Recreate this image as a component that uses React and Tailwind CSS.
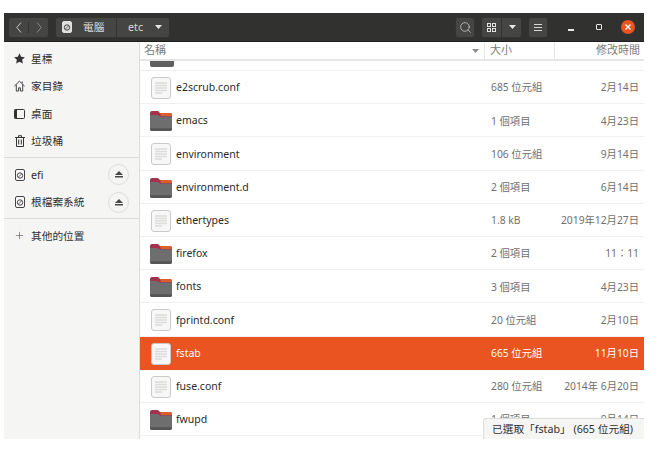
import { Search, Plus } from "lucide-react";

const FONT = "[font-family:'Noto_Sans','Noto_Sans_CJK_TC',sans-serif]";

const FILES = [
  { name: "e2scrub.conf", size: "685 位元組", date: "2月14日", type: "doc" },
  { name: "emacs", size: "1 個項目", date: "4月23日", type: "folder" },
  { name: "environment", size: "106 位元組", date: "9月14日", type: "doc" },
  { name: "environment.d", size: "2 個項目", date: "6月14日", type: "folder" },
  { name: "ethertypes", size: "1.8 kB", date: "2019年12月27日", type: "doc" },
  { name: "firefox", size: "2 個項目", date: "11：11", type: "folder" },
  { name: "fonts", size: "3 個項目", date: "4月23日", type: "folder" },
  { name: "fprintd.conf", size: "20 位元組", date: "2月10日", type: "doc" },
  { name: "fstab", size: "665 位元組", date: "11月10日", type: "doc", selected: true },
  { name: "fuse.conf", size: "280 位元組", date: "2014年 6月20日", type: "doc" },
  { name: "fwupd", size: "1 個項目", date: "9月14日", type: "folder" },
];

// Text file icon
const DocIcon = () => (
  <svg width="20" height="22" viewBox="0 0 20 22" className="shrink-0">
    <rect x="0.5" y="0.5" width="19" height="21" rx="2.5" fill="#f7f7f7" stroke="#c9c9c6" />
    <path d="M4 6h12M4 8.5h12M4 11h12M4 13.5h12M4 16h7" stroke="#dcdcda" strokeWidth="1.4" />
  </svg>
);

// Yaru style folder
const FolderIcon = () => (
  <svg width="24" height="22" viewBox="0 0 24 22" className="shrink-0">
    <path d="M1 3a2 2 0 0 1 2-2h6l2 2h10a2 2 0 0 1 2 2v4H1z" fill="#a3324f" />
    <path d="M11 3h10a2 2 0 0 1 2 2v1H12z" fill="#d9602c" />
    <path d="M1 6a1 1 0 0 1 1-1h6l3 1.500h11a1 1 0 0 1 1 1V19a2 2 0 0 1-2 2H3a2 2 0 0 1-2-2z" fill="#6e6e6e" />
    <path d="M1 19a2 2 0 0 0 2 2h18a2 2 0 0 0 2-2v-.7H1z" fill="#555" />
  </svg>
);

const DiskIcon = ({ light }) => (
  <svg width="10" height="12" viewBox="0 0 10 12" className="shrink-0">
    <rect x="0.5" y="0.5" width="9" height="11" rx="1.5" fill={light ? "#e0e0de" : "#fafafa"} stroke={light ? "#e0e0de" : "#444"} />
    <circle cx="5" cy="6.500" r="2.700" fill="none" stroke="#444" strokeWidth="1" />
    <path d="M3.500 8l3-3" stroke="#444" strokeWidth="0.8" />
  </svg>
);

const StarIcon = () => (
  <svg width="11" height="11" viewBox="0 0 11 11">
    <path d="M5.500 0.300 7.100 3.800 10.900 4.200 8.100 6.800 8.900 10.600 5.500 8.700 2.100 10.600 2.900 6.800 0.100 4.200 3.900 3.800z" fill="#333" />
  </svg>
);

const HomeIcon = () => (
  <svg width="12" height="12" viewBox="0 0 12 12" fill="none" stroke="#333" strokeWidth="1">
    <path d="M0.500 6 6 0.800 11.500 6M2.500 4.500V11.500H5V8H7V11.500H9.500V4.500M9 3V1.200" />
  </svg>
);

const PanelIcon = () => (
  <svg width="11" height="10" viewBox="0 0 11 10">
    <rect x="0.500" y="0.500" width="10" height="9" rx="1" fill="none" stroke="#333" />
    <rect x="0.500" y="0.500" width="2.500" height="9" fill="#333" />
  </svg>
);

const TrashIcon = () => (
  <svg width="10" height="12" viewBox="0 0 10 12" fill="none" stroke="#333" strokeWidth="1">
    <path d="M0 2.500H10M3.500 2.500V0.700H6.500V2.500M1.500 2.500V11.500H8.500V2.500M3.700 4.500V9.500M6.300 4.500V9.500" />
  </svg>
);

const EjectButton = () => (
  <div className="w-[21px] h-[21px] rounded-full border border-[#dcdcda] flex items-center justify-center shrink-0">
    <svg width="8" height="7" viewBox="0 0 8 7">
      <path d="M4 0 8 4H0z" fill="#4a4a4a" />
      <rect y="5" width="8" height="1.5" fill="#4a4a4a" />
    </svg>
  </div>
);

const SideItem = ({ icon, label, eject }) => (
  <div className="flex items-center h-[27.5px] pl-[10px] pr-[10px]">
    <div className="w-[11px] flex justify-center shrink-0">{icon}</div>
    <span className="ml-[6px] text-[10.7px] text-[#2f2f2f] grow">{label}</span>
    {eject && <EjectButton />}
  </div>
);

const FileRow = ({ file }) => (
  <div
    className={`flex items-center h-[33.2px] pt-[2px] border-b ${
      file.selected ? "bg-[#e95420] border-[#e95420] text-white" : "border-[#f1f1f0] text-[#2b2b2b]"
    }`}
  >
    <div className="w-[31px] flex justify-center ml-[5px] shrink-0">
      {file.type === "doc" ? <DocIcon /> : <FolderIcon />}
    </div>
    <span className="text-[10.5px] grow">{file.name}</span>
    <span className={`w-[63px] text-[10.3px] shrink-0 ${file.selected ? "" : "text-[#6f6f6f]"}`}>{file.size}</span>
    <span className={`w-[90px] pr-[5px] text-right text-[10.3px] shrink-0 ${file.selected ? "" : "text-[#6f6f6f]"}`}>{file.date}</span>
  </div>
);

const ToolBtn = ({ children, className = "" }) => (
  <div className={`h-[21px] bg-[#454543] flex items-center justify-center rounded-[3px] border border-[#333331] ${className}`}>
    {children}
  </div>
);

export default function App() {
  return (
    <div className={`w-[665px] h-[450px] bg-white pt-[13px] pl-[4px] ${FONT}`}>
      <div className="w-[640px] h-[426px] flex flex-col overflow-hidden relative bg-white">
        {/* Header bar */}
        <div className="h-[29px] bg-[#313130] border-b border-[#1f1f1f] flex items-center pl-[4px] pr-[9px] shrink-0">
          <ToolBtn className="w-[41px] !justify-start">
            <div className="w-[21px] flex justify-center border-r border-[#333331]">
              <svg width="6" height="11" viewBox="0 0 6 11" fill="none" stroke="#c9c9c7">
                <path d="M5 0.500 0.800 5.500 5 10.500" />
              </svg>
            </div>
            <div className="w-[19px] flex justify-center">
              <svg width="6" height="11" viewBox="0 0 6 11" fill="none" stroke="#8a8a88">
                <path d="M1 0.500 5.200 5.500 1 10.500" />
              </svg>
            </div>
          </ToolBtn>
          <ToolBtn className="ml-[6px] w-[115px] !justify-start text-[10.7px] text-[#d8d8d6]">
            <div className="w-[61px] h-full flex items-center border-r border-[#333331] pl-[6px] gap-[11px]">
              <DiskIcon light />
              <span>電腦</span>
            </div>
            <span className="ml-[11px]">etc</span>
            <svg width="7" height="4" viewBox="0 0 7 4" className="ml-[12px]">
              <path d="M0 0h7L3.500 4z" fill="#e8e8e6" />
            </svg>
          </ToolBtn>
          <div className="grow" />
          <ToolBtn className="w-[20px]">
            <Search size={13} strokeWidth={1.2} color="#e2e2e0" />
          </ToolBtn>
          <ToolBtn className="ml-[6px] w-[41px] !justify-start">
            <div className="w-[20px] h-full flex items-center justify-center border-r border-[#333331]">
              <svg width="9" height="9" viewBox="0 0 9 9" fill="none" stroke="#e2e2e0">
                <rect x="0.5" y="0.5" width="3" height="3" />
                <rect x="5.5" y="0.5" width="3" height="3" />
                <rect x="0.5" y="5.5" width="3" height="3" />
                <rect x="5.5" y="5.5" width="3" height="3" />
              </svg>
            </div>
            <svg width="7" height="4" viewBox="0 0 7 4" className="ml-[7px]">
              <path d="M0 0h7L3.500 4z" fill="#e8e8e6" />
            </svg>
          </ToolBtn>
          <ToolBtn className="ml-[6px] w-[20px]">
            <svg width="8" height="7" viewBox="0 0 8 7" fill="#d8d8d6">
              <rect width="8" height="1" />
              <rect y="3" width="8" height="1" />
              <rect y="6" width="8" height="1" />
            </svg>
          </ToolBtn>
          <div className="w-[6px] h-[1.5px] bg-[#e8e8e6] ml-[20px] mt-[6px]" />
          <div className="w-[6px] h-[6px] border border-[#e8e8e6] rounded-[1px] ml-[22px]" />
          <div className="w-[14px] h-[14px] rounded-full bg-[#e95420] ml-[19px] flex items-center justify-center">
            <svg width="6" height="6" viewBox="0 0 6 6" stroke="#fff" strokeWidth="1.3">
              <path d="M0.5 0.5l5 5M5.5 0.5l-5 5" />
            </svg>
          </div>
        </div>

        <div className="flex grow min-h-0">
          {/* Sidebar */}
          <div className="w-[136px] bg-[#f5f5f4] border-r border-[#dcdcda] shrink-0 flex flex-col pt-[3px]">
            <SideItem icon={<StarIcon />} label="星標" />
            <SideItem icon={<HomeIcon />} label="家目錄" />
            <SideItem icon={<PanelIcon />} label="桌面" />
            <SideItem icon={<TrashIcon />} label="垃圾桶" />
            <div className="h-px bg-[#dcdcda] mt-[2px] mb-[3px]" />
            <SideItem icon={<DiskIcon />} label="efi" eject />
            <SideItem icon={<DiskIcon />} label="根檔案系統" eject />
            <div className="h-px bg-[#dcdcda] mt-[2px] mb-[3px]" />
            <SideItem icon={<Plus size={11} strokeWidth={1.1} color="#333" />} label="其他的位置" />
          </div>

          {/* File list */}
          <div className="grow min-w-0 flex flex-col">
            <div className="h-[19px] flex items-stretch border-b-2 border-[#e6e6e5] text-[11px] text-[#7b7b7b] shrink-0">
              <div className="grow flex items-center justify-between pl-[4px] pr-[5px] border-r border-[#e6e6e5]">
                <span>名稱</span>
                <svg width="7" height="4" viewBox="0 0 7 4">
                  <path d="M0 0h7L3.500 4z" fill="#8c8c8c" />
                </svg>
              </div>
              <div className="w-[70px] flex items-center pl-[5px] border-r border-[#e6e6e5]">大小</div>
              <div className="w-[89px] flex items-center justify-end pr-[4px]">修改時間</div>
            </div>
            <div className="h-[10px] border-b border-[#f1f1f0] overflow-hidden flex items-end pl-[10px] shrink-0">
              <div className="w-[24px] h-[6px] bg-[#5f5f5f] rounded-b-[2px] mb-[3px]" />
            </div>
            {FILES.map(file => (
              <FileRow key={file.name} file={file} />
            ))}
          </div>
        </div>

        {/* Status overlay */}
        <div className="absolute right-0 bottom-0 h-[21px] w-[161px] bg-[#f5f5f4] border-t border-l border-[#dcdcda] rounded-tl-[3px] flex items-center pl-[8px] text-[10.7px] text-[#2f2f2f] whitespace-pre">
          已選取「fstab」 (665 位元組)
        </div>
      </div>
    </div>
  );
}
